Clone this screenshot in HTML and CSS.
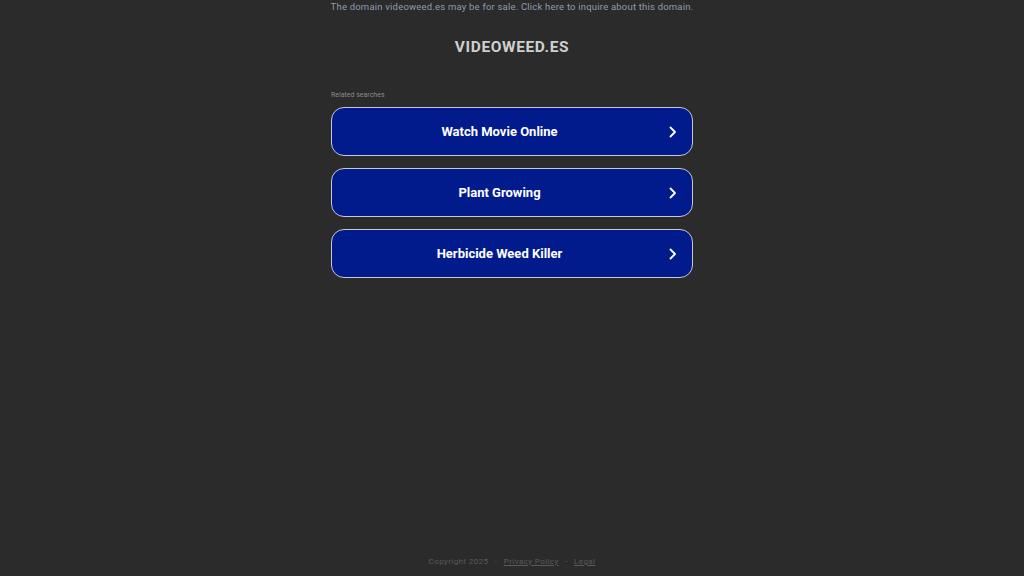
FILE: index.html
```html
<!DOCTYPE html>
<html>
<head>
<meta charset="utf-8">
<link rel="stylesheet" href="styles.css">
</head>
<body>
<div class="page">
  <div class="topbar">The domain videoweed.es may be for sale. Click here to inquire about this domain.</div>
  <h1 class="domain">VIDEOWEED.ES</h1>
  <div class="related">
    <div class="label">Related searches</div>
    <a class="btn"><span>Watch Movie Online</span><svg class="chev" viewBox="0 0 8 12" width="8" height="12"><path d="M1.5 1.5 L6 6 L1.5 10.5" fill="none" stroke="#fff" stroke-width="1.8" stroke-linecap="round" stroke-linejoin="round"/></svg></a>
    <a class="btn"><span>Plant Growing</span><svg class="chev" viewBox="0 0 8 12" width="8" height="12"><path d="M1.5 1.5 L6 6 L1.5 10.5" fill="none" stroke="#fff" stroke-width="1.8" stroke-linecap="round" stroke-linejoin="round"/></svg></a>
    <a class="btn"><span>Herbicide Weed Killer</span><svg class="chev" viewBox="0 0 8 12" width="8" height="12"><path d="M1.5 1.5 L6 6 L1.5 10.5" fill="none" stroke="#fff" stroke-width="1.8" stroke-linecap="round" stroke-linejoin="round"/></svg></a>
  </div>
  <div class="spacer"></div>
  <div class="footer">Copyright 2025 <span class="dot">-</span> <a class="flink">Privacy Policy</a> <span class="dot">-</span> <a class="flink">Legal</a></div>
</div>
</body>
</html>
```
FILE: styles.css
```css
html, body {
  margin: 0;
  padding: 0;
  background: #2b2b2b;
  font-family: Roboto, "Liberation Sans", sans-serif;
}
.page {
  height: 576px;
  display: flex;
  flex-direction: column;
  align-items: center;
}
.topbar {
  margin-top: 1px;
  font-size: 9.5px;
  letter-spacing: 0.2px;
  color: #8e9cae;
  line-height: 12px;
}
.domain {
  margin: 25px 0 0 0;
  font-size: 15.5px;
  font-weight: 700;
  letter-spacing: 0.6px;
  color: #cfcfcf;
  line-height: 18px;
}
.related {
  width: 362px;
  margin-top: 35px;
  display: flex;
  flex-direction: column;
  gap: 12px;
}
.label {
  font-size: 7px;
  color: #8a8a8a;
  line-height: 9px;
  margin-bottom: -5px;
}
.btn {
  box-sizing: border-box;
  height: 49px;
  border: 1.5px solid #c8c8d0;
  border-radius: 13px;
  background: #011a8c;
  display: flex;
  align-items: center;
  justify-content: center;
  position: relative;
  color: #fff;
  font-size: 13px;
  font-weight: 700;
}
.btn span {
  margin-left: -25px;
}
.chev {
  position: absolute;
  right: 15px;
  top: 18px;
}
.spacer {
  flex: 1;
}
.footer {
  font-size: 8px;
  color: #5a5a5a;
  letter-spacing: 0.4px;
  margin-bottom: 9px;
  line-height: 10px;
}
.dot {
  margin: 0 4px;
}
.flink {
  text-decoration: underline;
  color: #5a5a5a;
}
```
